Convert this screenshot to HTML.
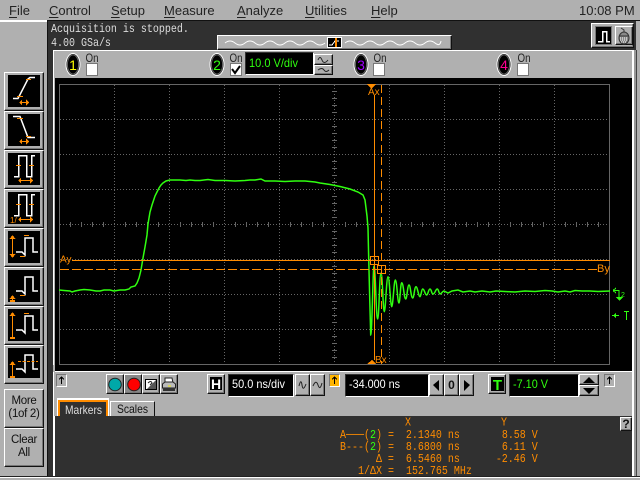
<!DOCTYPE html>
<html><head><meta charset="utf-8">
<style>
html,body{margin:0;padding:0;background:#b0b0b0}
#p{position:relative;width:640px;height:480px;overflow:hidden;background:#b0b0b0;font-family:"Liberation Sans",sans-serif}
.a{position:absolute;box-sizing:border-box}
.b{position:absolute;box-sizing:border-box;background:#b0b0b0;border:1px solid;border-color:#fff #111 #111 #fff;box-shadow:inset -1px -1px 0 #777}
.k{position:absolute;box-sizing:border-box;background:#000;border:1px solid;border-color:#333 #fff #fff #333}
.m{position:absolute;top:3px;font-size:13px;line-height:16px;color:#222;white-space:nowrap}
.m u{text-underline-offset:2px}
.t{position:absolute;text-align:center;font-size:11.5px;letter-spacing:-.3px;line-height:13px;padding-top:5px;color:#111}
svg{position:absolute;left:0;top:0}
.mo{font-family:"Liberation Mono",monospace;font-size:10px;fill:#ff8c00;white-space:pre}
.s{font-family:"Liberation Sans",sans-serif}
</style></head><body><div id="p">
<div class="m" style="left:9px"><u>F</u>ile</div>
<div class="m" style="left:49px"><u>C</u>ontrol</div>
<div class="m" style="left:111px"><u>S</u>etup</div>
<div class="m" style="left:164px"><u>M</u>easure</div>
<div class="m" style="left:237px"><u>A</u>nalyze</div>
<div class="m" style="left:305px"><u>U</u>tilities</div>
<div class="m" style="left:371px"><u>H</u>elp</div>
<div class="m" style="left:579px">10:08 PM</div>
<div class="a" style="left:0;top:20px;width:47px;height:2px;background:#fff"></div>
<div class="a" style="left:47px;top:20px;width:593px;height:1px;background:#111"></div>
<div class="a" style="left:47px;top:21px;width:589px;height:29px;background:#303030"></div>
<div class="a" style="left:47px;top:21px;width:6px;height:456px;background:#303030;border-left:1px solid #111"></div>
<div class="a" style="left:53px;top:50px;width:581px;height:315px;background:#b0b0b0;border-top:1px solid #fff;border-left:1px solid #fff"></div>
<div class="a" style="left:634px;top:50px;width:2px;height:427px;background:#999"></div>
<div class="a" style="left:632px;top:50px;width:2px;height:427px;background:#fff"></div>
<div class="a" style="left:636px;top:50px;width:1px;height:427px;background:#444"></div>
<div class="a" style="left:55px;top:78px;width:577px;height:294px;background:#000;border-bottom:1px solid #fff"></div>
<div class="a" style="left:53px;top:372px;width:579px;height:44px;background:#b0b0b0;border-left:1px solid #fff"></div>
<div class="a" style="left:55px;top:416px;width:577px;height:61px;background:#303030"></div>
<div class="a" style="left:53px;top:416px;width:2px;height:61px;background:#fff"></div>
<div class="a" style="left:0;top:477px;width:640px;height:1px;background:#fff"></div>
<div class="a" style="left:0;top:476px;width:640px;height:1px;background:#222"></div>

<!-- left buttons -->
<div class="b" style="left:4px;top:72px;width:40px;height:39px"></div>
<div class="b" style="left:4px;top:111px;width:40px;height:39px"></div>
<div class="b" style="left:4px;top:150px;width:40px;height:39px"></div>
<div class="b" style="left:4px;top:189px;width:40px;height:39px"></div>
<div class="b" style="left:4px;top:228px;width:40px;height:39px"></div>
<div class="b" style="left:4px;top:267px;width:40px;height:39px"></div>
<div class="b" style="left:4px;top:306px;width:40px;height:39px"></div>
<div class="b" style="left:4px;top:345px;width:40px;height:39px"></div>
<div class="a" style="left:8px;top:75px;width:32px;height:32px;background:#000"></div>
<div class="a" style="left:8px;top:114px;width:32px;height:32px;background:#000"></div>
<div class="a" style="left:8px;top:153px;width:32px;height:32px;background:#000"></div>
<div class="a" style="left:8px;top:192px;width:32px;height:32px;background:#000"></div>
<div class="a" style="left:8px;top:231px;width:32px;height:32px;background:#000"></div>
<div class="a" style="left:8px;top:270px;width:32px;height:32px;background:#000"></div>
<div class="a" style="left:8px;top:309px;width:32px;height:32px;background:#000"></div>
<div class="a" style="left:8px;top:348px;width:32px;height:30px;background:#000"></div>
<div class="b t" style="left:4px;top:389px;width:40px;height:39px">More<br>(1of 2)</div>
<div class="b t" style="left:4px;top:428px;width:40px;height:39px">Clear<br>All</div>

<!-- top strip + top right -->
<div class="b" style="left:217px;top:35px;width:235px;height:15px"></div>
<div class="b" style="left:591px;top:23px;width:43px;height:25px;background:#b0b0b0"></div>
<div class="a" style="left:595px;top:26px;width:17px;height:19px;background:#000;border:1px solid #777"></div>
<div class="b" style="left:615px;top:26px;width:18px;height:19px"></div>

<!-- channel row -->
<div class="k" style="left:245px;top:52px;width:69px;height:23px"></div>
<div class="b" style="left:314px;top:54px;width:19px;height:11px"></div>
<div class="b" style="left:314px;top:65px;width:19px;height:10px"></div>
<div class="a" style="left:86px;top:63px;width:12px;height:13px;background:#fff;border:1px solid #777"></div>
<div class="a" style="left:230px;top:63px;width:12px;height:13px;background:#fff;border:1px solid #777"></div>
<div class="a" style="left:373px;top:63px;width:12px;height:13px;background:#fff;border:1px solid #777"></div>
<div class="a" style="left:517px;top:63px;width:12px;height:13px;background:#fff;border:1px solid #777"></div>

<!-- bottom row -->
<div class="a" style="left:56px;top:374px;width:11px;height:13px;background:#b0b0b0;border:1px solid;border-color:#777 #fff #fff #777"></div>
<div class="b" style="left:106px;top:374px;width:18px;height:20px;background:#999"></div>
<div class="b" style="left:124px;top:374px;width:18px;height:20px;background:#888"></div>
<div class="b" style="left:142px;top:374px;width:18px;height:20px"></div>
<div class="b" style="left:160px;top:374px;width:18px;height:20px"></div>
<div class="b" style="left:207px;top:374px;width:18px;height:20px"></div>
<div class="k" style="left:228px;top:374px;width:66px;height:23px"></div>
<div class="b" style="left:295px;top:374px;width:15px;height:22px"></div>
<div class="b" style="left:310px;top:374px;width:15px;height:22px"></div>
<div class="a" style="left:329px;top:374px;width:11px;height:13px;background:#ffb400;border:1px solid;border-color:#777 #fff #fff #777"></div>
<div class="k" style="left:345px;top:374px;width:84px;height:23px"></div>
<div class="b" style="left:429px;top:374px;width:15px;height:22px"></div>
<div class="b" style="left:444px;top:374px;width:15px;height:22px"></div>
<div class="b" style="left:459px;top:374px;width:15px;height:22px"></div>
<div class="b" style="left:488px;top:374px;width:18px;height:20px"></div>
<div class="k" style="left:509px;top:374px;width:70px;height:23px"></div>
<div class="b" style="left:579px;top:374px;width:20px;height:11px"></div>
<div class="b" style="left:579px;top:385px;width:20px;height:11px"></div>
<div class="a" style="left:604px;top:374px;width:11px;height:13px;background:#b0b0b0;border:1px solid;border-color:#777 #fff #fff #777"></div>

<!-- tabs -->
<div class="a" style="left:57px;top:398px;width:52px;height:18px;background:#fff"></div>
<div class="a" style="left:58px;top:400px;width:50px;height:16px;background:#303030;border-top:2px solid #ff8c00;border-left:2px solid #ff8c00;border-right:2px solid #ff8c00"></div>
<div class="a" style="left:110px;top:401px;width:45px;height:15px;background:#b0b0b0;border-top:1px solid #fff;border-left:1px solid #fff;border-right:1px solid #111"></div>
<div class="b" style="left:620px;top:417px;width:12px;height:14px"></div>

<svg width="640" height="480" viewBox="0 0 640 480" shape-rendering="crispEdges" fill="none">
<!-- grid -->
<rect x="59.5" y="84.5" width="550" height="280" stroke="#666"/>
<g stroke="#666" stroke-dasharray="1 2">
<path d="M114.5 85V364M169.5 85V364M224.5 85V364M279.5 85V364M389.5 85V364M444.5 85V364M499.5 85V364M554.5 85V364"/>
<path d="M60 119.5H609M60 154.5H609M60 189.5H609M60 259.5H609M60 294.5H609M60 329.5H609"/>
<path d="M334.5 85V364M60 224.5H609"/>
</g>
<g stroke="#666">
<path d="M70.5 222V227M81.5 222V227M92.5 222V227M103.5 222V227M125.5 222V227M136.5 222V227M147.5 222V227M158.5 222V227M180.5 222V227M191.5 222V227M202.5 222V227M213.5 222V227M235.5 222V227M246.5 222V227M257.5 222V227M268.5 222V227M290.5 222V227M301.5 222V227M312.5 222V227M323.5 222V227M345.5 222V227M356.5 222V227M400.5 222V227M411.5 222V227M422.5 222V227M433.5 222V227M455.5 222V227M466.5 222V227M477.5 222V227M488.5 222V227M510.5 222V227M521.5 222V227M532.5 222V227M543.5 222V227M565.5 222V227M576.5 222V227M587.5 222V227M598.5 222V227"/>
<path d="M332 91.5H337M332 98.5H337M332 105.5H337M332 112.5H337M332 126.5H337M332 133.5H337M332 140.5H337M332 147.5H337M332 161.5H337M332 168.5H337M332 175.5H337M332 182.5H337M332 196.5H337M332 203.5H337M332 210.5H337M332 217.5H337M332 231.5H337M332 238.5H337M332 245.5H337M332 252.5H337M332 266.5H337M332 273.5H337M332 280.5H337M332 287.5H337M332 301.5H337M332 308.5H337M332 315.5H337M332 322.5H337M332 336.5H337M332 343.5H337M332 350.5H337M332 357.5H337"/>
</g>
<!-- waveform -->
<g shape-rendering="auto">
<path stroke="#30ff10" stroke-width="1.5" d="M59 290L64 290.5L70 291L72 292L75 291L80 290L84 289.5L90 290L96 291L100 291L104 290L110 290L114 291L120 290L125 290L129 289L131 287L135 286L137 283L139 278L141 270L143 258L145 247L147 235L148 224L150 212L152 205L154 199L155 196L157 192L159 188L161 185L163 183L166 181L170 180L175 180L180 180L186 180.5L190 180L195 180.5L200 180.5L208 179.5L215 180.5L225 180.5L235 181L245 180.5L250 180L255 180L261 179L265 181L275 181L285 181.5L295 181L305 181L315 182L320 183L330 184.5L340 186.5L350 189L358 192L363 195L365 200L366 208L367 216L368 228L368.5 250L369.5 290L370.7 335C372 335 373 266 374 266C375.5 266 376 319 377.7 319C379 319 379.5 273 381 273C382.5 273 383 311.7 384.3 311.7C385.5 311.7 386.5 276.7 388 276.7C389.5 276.7 390.5 306.7 391.7 306.7C393 306.7 394 280 395.3 280C397 280 397.5 303 399 303C400 303 400.5 282.7 401.7 282.7C403.5 282.7 404 299 405.7 299C407 299 407.5 285 409 285C410.5 285 411 298 412.7 298C414 298 414.5 286.7 416 286.7C417.5 286.7 418.5 296.7 420 296.7C421 296.7 421.5 289 422.7 289C424.5 289 425 295 426.7 295C428 295 428.5 289 430 289C431.5 289 431.5 294 433 294C435 294 435.5 289 437.3 289C438.5 289 439 294 440 294C441.5 294 442.5 291 444 291L448 293L452 291L458 290L463 292L470 291L475 292L482 291L490 292L496 291L505 291.5L515 292L525 291L535 291.5L545 290.5L552 291L558 292L565 291L570 292L575 290.5L582 291L590 291L598 291.5L610 291"/>
</g>
<!-- markers -->
<path stroke="#ff8c00" d="M72 260.5H610"/>
<path stroke="#ff8c00" stroke-dasharray="9 3" d="M60 269.5H597"/>
<path stroke="#ff8c00" d="M374.5 95V360"/>
<path stroke="#ff8c00" stroke-dasharray="8 4" d="M381.5 85V364"/>
<rect x="370.5" y="256.5" width="8" height="8" stroke="#ff8c00"/>
<rect x="377.5" y="265.5" width="8" height="8" stroke="#ff8c00"/>
<path fill="#ff8c00" d="M367 84H376L371.5 89Z"/>
<path fill="#ff8c00" d="M367 364H376L372 360Z"/>
<text class="s" x="60" y="262.5" font-size="10" fill="#ff8c00" shape-rendering="auto">Ay</text>
<text class="s" x="597" y="272" font-size="11" fill="#ff8c00">By</text>
<text class="s" x="368" y="95" font-size="10" fill="#ff8c00">Ax</text>
<text class="s" x="375" y="363" font-size="10" fill="#ff8c00">Bx</text>
<!-- right markers -->
<path stroke="#30ff10" d="M613 290.5H619V297M613 290.5L616 288M613 290.5L616 293M612 315.5H619"/>
<path fill="#30ff10" d="M616 297H623L619.5 301Z M613 315.5L616 312.5V318.5Z"/>
<text x="621" y="297" font-size="7" fill="#30ff10" font-family="Liberation Sans">2</text>
<path stroke="#30ff10" d="M624 311.5H629M626.5 311V320"/>

<!-- top text -->
<text class="mo" x="51" y="32" style="fill:#ddd" transform="translate(0 -6.4) scale(1 1.2)">Acquisition is stopped.</text>
<text class="mo" x="51" y="46" style="fill:#ddd" transform="translate(0 -9.2) scale(1 1.2)">4.00 GSa/s</text>

<!-- strip wave -->
<path shape-rendering="auto" stroke="#fff" d="M225 43q5 -4 10 0t10 0t10 0t10 0t10 0t10 0t10 0t10 0t10 0t10 0M345 43q5 -4 10 0t10 0t10 0t10 0t10 0t10 0t10 0t10 0t10 0t6 -2"/>
<rect x="327.5" y="37.5" width="14" height="10" fill="#000" stroke="#fff"/>
<path stroke="#fff" d="M329 45H332L335 41H339"/><path stroke="#ff8c00" stroke-width="2" d="M336 38V47"/>

<!-- top right icons -->
<path stroke="#fff" stroke-width="1.5" d="M598 41.5H602.5V31.5H606.5V41.5H610"/>
<g shape-rendering="auto">
<ellipse cx="624" cy="38" rx="5" ry="6" fill="#888" stroke="#333"/>
<path stroke="#333" d="M619 36H629M624 32V30L621 28"/>
<path stroke="#fff" stroke-dasharray="1 1" d="M620 38H628M620 40H628M621 42H627"/>
</g>

<!-- channels -->
<g shape-rendering="auto">
<ellipse cx="73" cy="64.5" rx="7" ry="11" fill="#000" stroke="#fff"/><ellipse cx="73" cy="64.5" rx="5.6" ry="9.6" stroke="#666"/>
<ellipse cx="217" cy="64.5" rx="7" ry="11" fill="#000" stroke="#fff"/><ellipse cx="217" cy="64.5" rx="5.6" ry="9.6" stroke="#666"/>
<ellipse cx="361" cy="64.5" rx="7" ry="11" fill="#000" stroke="#fff"/><ellipse cx="361" cy="64.5" rx="5.6" ry="9.6" stroke="#666"/>
<ellipse cx="504" cy="64.5" rx="7" ry="11" fill="#000" stroke="#fff"/><ellipse cx="504" cy="64.5" rx="5.6" ry="9.6" stroke="#666"/>
<g font-family="Liberation Sans" font-size="14" text-anchor="middle">
<text x="73" y="70" fill="#ff0">1</text>
<text x="217" y="70" fill="#30ff10">2</text>
<text x="361" y="70" fill="#a000ff">3</text>
<text x="504" y="70" fill="#ff0090">4</text>
</g>
<g font-family="Liberation Sans" font-size="12" fill="#222">
<text x="85.5" y="62" textLength="13" lengthAdjust="spacingAndGlyphs">On</text><text x="229.5" y="62" textLength="13" lengthAdjust="spacingAndGlyphs">On</text><text x="373.5" y="62" textLength="13" lengthAdjust="spacingAndGlyphs">On</text><text x="517.5" y="62" textLength="13" lengthAdjust="spacingAndGlyphs">On</text>
</g>
<path stroke="#000" stroke-width="2" d="M232 69L235 73L240 66"/>
<text x="249" y="67" font-family="Liberation Sans" font-size="12" fill="#30ff10" textLength="49" lengthAdjust="spacingAndGlyphs">10.0 V/div</text>
<path stroke="#222" d="M318 60Q320 55 322 60T328 60M318 70Q322 67 324 70T329 70"/>
</g>

<!-- left icons -->
<g stroke="#fff" stroke-width="1.5">
<path shape-rendering="auto" d="M13 98.5H18L28 79L30 77.5H35"/>
<path shape-rendering="auto" d="M13 116.5H20L28 137.5H35"/>
<path d="M14 176.5H18.5V155.5H26.5V176.5H31.5V155.5H35"/>
<path d="M14 215.5H18.5V194.5H26.5V215.5H31.5V194.5H35"/>
<path shape-rendering="auto" d="M16 252H22L25 255L25 238H28L30 238H33V252H38"/>
<path shape-rendering="auto" d="M16 291H22L25 294L25 277H28L30 277H33V291H38"/>
<path shape-rendering="auto" d="M16 330H22L25 333L25 316H28L30 316H33V330H38"/>
<path shape-rendering="auto" d="M16 369H22L25 372L25 355H28L30 355H33V369H38"/>
</g>
<g stroke="#ff8c00" stroke-width="1.3">
<path d="M26 79.5H31M17 96.5H23M17 118.5H23M26 136.5H31M16 165.5H21M29 165.5H34M16 204.5H21M29 204.5H34M24 235.5H29M20 256.5H25M20 295.5H25M24 313.5H29"/>
<path stroke-dasharray="3 1.5" d="M18 361.5H38"/>
<path d="M20 102.5H28M20 141.5H28M19 180.5H32M19 219.5H32M12.5 237V256M12.5 298V301M12.5 313V338M12.5 362V378"/>
</g>
<path fill="#ff8c00" d="M19 102.5L22 99.5V105.5ZM29 102.5L26 99.5V105.5ZM19 141.5L22 138.5V144.5ZM29 141.5L26 138.5V144.5ZM18 180.5L21 177.5V183.5ZM33 180.5L30 177.5V183.5ZM18 219.5L21 216.5V222.5ZM33 219.5L30 216.5V222.5ZM12.5 235L9.5 239H15.5ZM12.5 258L9.5 254H15.5ZM12.5 295L9.5 299H15.5ZM10 300H15V302H10ZM12.5 312L9.5 316H15.5ZM10 337H15V339H10ZM12.5 361L9.5 365H15.5ZM10 376H15V378H10Z"/>
<text x="10" y="223" font-family="Liberation Sans" font-size="8" fill="#ff8c00">1/</text>

<!-- bottom icons -->
<g shape-rendering="auto">
<circle cx="115" cy="384.5" r="6.3" fill="#00a8a8" stroke="#222"/>
<circle cx="134" cy="384.5" r="6.3" fill="#f00" stroke="#222"/>
<rect x="145.5" y="379.5" width="11" height="10" fill="#fff" stroke="#000"/>
<path fill="#555" d="M147 389L156 380V389Z"/>
<path stroke="#222" d="M148 383Q151 380 152 383L150 385"/>
<path fill="#fff" stroke="#222" d="M165 383V378H172L173 383Z"/>
<path fill="#bbb" stroke="#222" d="M162.5 388V384L165 382H173L175.5 384V388Z"/>
<path fill="#333" d="M163 388H175V391H163Z"/>
<path stroke="#ee0" d="M168 386H171"/>
</g>
<path stroke="#000" d="M61.5 377V384M59 379.5L61.5 377L64 379.5M334.5 377V384M332 379.5L334.5 377L337 379.5M609.5 377V384M607 379.5L609.5 377L612 379.5"/>
<rect x="210" y="377" width="12" height="13" fill="#000"/>
<rect x="491" y="377" width="13" height="14" fill="#000"/>
<text x="216" y="389" text-anchor="middle" font-family="Liberation Sans" font-weight="bold" font-size="14" fill="#fff">H</text>
<text x="497.5" y="390" text-anchor="middle" font-family="Liberation Sans" font-weight="bold" font-size="15" fill="#30ff10">T</text>
<g font-family="Liberation Sans" font-size="12" shape-rendering="auto">
<text x="232" y="388" fill="#fff" textLength="53" lengthAdjust="spacingAndGlyphs">50.0 ns/div</text>
<text x="349" y="388" fill="#fff" textLength="51" lengthAdjust="spacingAndGlyphs">-34.000 ns</text>
<text x="513" y="388" fill="#30ff10" textLength="35" lengthAdjust="spacingAndGlyphs">-7.10 V</text>
<text x="451.5" y="389" text-anchor="middle" font-weight="bold" fill="#111">0</text>
</g>
<g shape-rendering="auto" stroke="#222">
<path d="M299 386Q301 378 302 385T306 384"/>
<path d="M313 386Q316 379 318 385T322 383"/>
</g>
<path shape-rendering="auto" fill="#000" d="M433 385L439 380V391ZM470 385L464 380V391ZM583 383L589 377L595 383ZM583 388L589 394L595 388Z"/>

<!-- tabs text -->
<g font-family="Liberation Sans" font-size="12" shape-rendering="auto">
<text x="65" y="414" fill="#ddd" textLength="37" lengthAdjust="spacingAndGlyphs">Markers</text>
<text x="117" y="413" fill="#111" textLength="31" lengthAdjust="spacingAndGlyphs">Scales</text>
<text x="626" y="428" text-anchor="middle" font-weight="bold" font-size="12" fill="#111">?</text>
</g>

<!-- readout -->
<g transform="translate(0 -82) scale(1 1.2)">
<text class="mo" x="405" y="423">X</text><text class="mo" x="501" y="423">Y</text>
<text class="mo" x="340" y="433.5">A───(<tspan style="fill:#30ff10">2</tspan>) =  2.1340 ns       8.58 V</text>
<text class="mo" x="340" y="443.5">B---(<tspan style="fill:#30ff10">2</tspan>) =  8.6800 ns       6.11 V</text>
<text class="mo" x="340" y="453.5">      Δ =  6.5460 ns      -2.46 V</text>
<text class="mo" x="358" y="463.5">1/ΔX =  152.765 MHz</text>
</g>
</svg>
</div></body></html>
